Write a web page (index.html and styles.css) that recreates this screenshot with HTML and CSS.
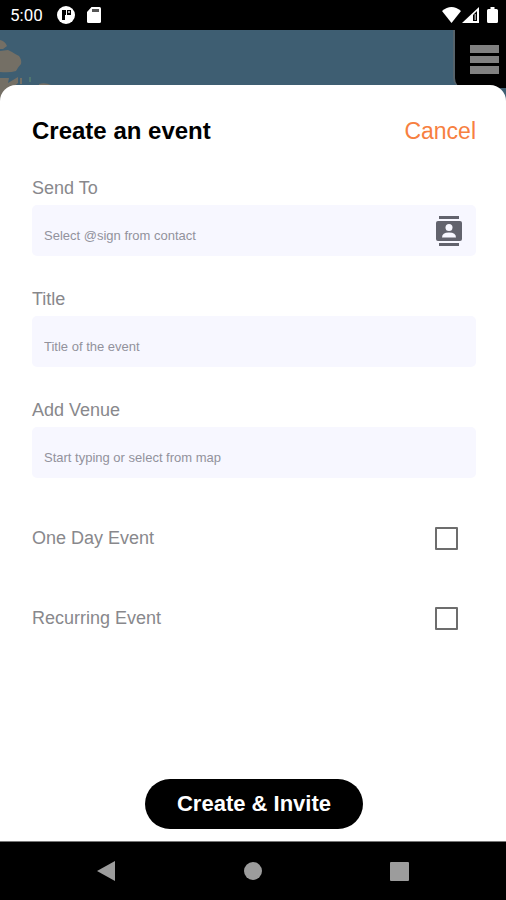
FILE: index.html
```html
<!DOCTYPE html>
<html lang="en">
<head>
<meta charset="utf-8">
<meta name="viewport" content="width=device-width, initial-scale=1">
<title>Create an event</title>
<link rel="stylesheet" href="styles.css">
</head>
<body>
<div class="screen">
  <header class="status">
    <span class="clock">5:00</span>
    <svg class="status-icon" width="18" height="18" viewBox="0 0 18 18" aria-hidden="true">
      <circle cx="9" cy="9" r="9" fill="#fff"/>
      <path d="M5 4h4v5H8v5H5zM10 4h4v5h-4z" fill="#000"/>
      <path d="M11 5h2v2h-2z" fill="#aaa"/>
    </svg>
    <svg width="14" height="16" viewBox="0 0 14 16" aria-hidden="true">
      <path d="M4.500 0H12.500Q14 0 14 1.500V14.500Q14 16 12.500 16H1.500Q0 16 0 14.500V5z" fill="#fff"/>
      <path d="M5 2h7v3H5z" fill="#555"/>
    </svg>
    <span class="spacer"></span>
    <svg width="19" height="16" viewBox="0 0 19 16" aria-hidden="true">
      <path d="M0 4Q9.500-4 19 4L9.500 16z" fill="#fff"/>
    </svg>
    <svg class="signal" width="17" height="16" viewBox="0 0 17 16" aria-hidden="true">
      <path d="M17 0V16H0z" fill="#fff"/>
      <path d="M11 8L15 4V14H11z" fill="#000"/>
      <path d="M12.500 7h1.500v6h-1.500z" fill="#999"/>
    </svg>
    <svg class="battery" width="11" height="16" viewBox="0 0 11 16" aria-hidden="true">
      <path d="M3.500 0h4v2H9.500Q11 2 11 3.500V14.500Q11 16 9.500 16H1.500Q0 16 0 14.500V3.500Q0 2 1.500 2h2z" fill="#fff"/>
    </svg>
  </header>
  <div class="map">
    <svg class="land" width="60" height="70" viewBox="0 0 60 70" aria-hidden="true">
      <path d="M0 10Q5 11 7 16L3 19 0 19zM0 21L8 20 12 22Q15 24 19 26Q22 30 21 34Q18 37 16 41Q10 43 0 42zM0 48L9 48 8 53 13 50 18 47 18 53 12 58 0 70zM20 48h2v6h-2zM39 54q6-2 12 1H39z" fill="#746f65"/>
      <path d="M29 47h2v5h-2z" fill="#4f7770"/>
    </svg>
    <button class="menu" type="button" aria-label="Menu">
      <svg width="29" height="29" viewBox="0 0 29 29" aria-hidden="true">
        <path d="M0 0h29v8H0zM0 11h29v7H0zM0 21h29v8H0z" fill="#818181"/>
      </svg>
    </button>
  </div>
  <main class="sheet">
    <div class="heading">
      <h1>Create an event</h1>
      <button class="cancel" type="button">Cancel</button>
    </div>
    <form class="form">
      <label class="label" for="send-to">Send To</label>
      <div class="field">
        <input id="send-to" type="text" placeholder="Select @sign from contact">
        <button class="contacts" type="button" aria-label="Choose a contact">
          <svg width="26" height="30" viewBox="0 0 26 30" aria-hidden="true">
            <path d="M3 0h20v3H3zM3 27h20v3H3z" fill="#62636d"/>
            <rect y="5" width="26" height="20" rx="2" fill="#62636d"/>
            <circle cx="13" cy="11.500" r="3.500" fill="#f7f7ff"/>
            <path d="M6 21.500Q6 16.500 13 16.500T20 21.500z" fill="#f7f7ff"/>
          </svg>
        </button>
      </div>
      <label class="label" for="title">Title</label>
      <div class="field">
        <input id="title" type="text" placeholder="Title of the event">
      </div>
      <label class="label" for="venue">Add Venue</label>
      <div class="field">
        <input id="venue" type="text" placeholder="Start typing or select from map">
      </div>
      <div class="check-row">
        <label for="one-day">One Day Event</label>
        <input id="one-day" type="checkbox">
      </div>
      <div class="check-row">
        <label for="recurring">Recurring Event</label>
        <input id="recurring" type="checkbox">
      </div>
      <button class="submit" type="submit">Create &amp; Invite</button>
    </form>
  </main>
  <nav class="nav">
    <button type="button" aria-label="Back">
      <svg width="20" height="22" viewBox="0 0 20 22" aria-hidden="true"><path d="M19 1V21L1 11z" fill="#9c9c9c"/></svg>
    </button>
    <button type="button" aria-label="Home">
      <svg width="20" height="22" viewBox="0 0 20 22" aria-hidden="true"><circle cx="10" cy="11" r="9" fill="#9c9c9c"/></svg>
    </button>
    <button type="button" aria-label="Recent apps">
      <svg width="20" height="22" viewBox="0 0 20 22" aria-hidden="true"><rect x="0" y="2" width="19" height="19" rx="1" fill="#9c9c9c"/></svg>
    </button>
  </nav>
</div>
</body>
</html>
```
FILE: styles.css
```css
* {
  box-sizing: border-box;
}

body {
  margin: 0;
  font-family: "Liberation Sans", Arial, sans-serif;
}

button {
  padding: 0;
  border: 0;
  background: none;
  font: inherit;
  cursor: pointer;
}

svg {
  display: block;
}

.screen {
  display: flex;
  flex-direction: column;
  min-height: 100vh;
  background: #000;
}

.status {
  display: flex;
  align-items: center;
  height: 30px;
  padding: 0 8px 0 10px;
  color: #fff;
}

.clock {
  font-family: Roboto, sans-serif;
  font-size: 17px;
  line-height: 30px;
}

.status-icon {
  margin: 0 12px 0 14px;
}

.spacer {
  flex: 1;
}

.signal {
  margin: 0 8px 0 1px;
}

.map {
  display: flex;
  justify-content: space-between;
  height: 70px;
  margin-bottom: -15px;
  background: #3e5e72;
}

.menu {
  display: flex;
  justify-content: flex-end;
  width: 53px;
  height: 58px;
  padding: 15px 7px 0 0;
  border-left: 2px solid #56636b;
  border-bottom-left-radius: 10px;
  background: #000;
}

.sheet {
  display: flex;
  flex: 1;
  flex-direction: column;
  padding: 30px 30px 12px 32px;
  border-radius: 16px 16px 0 0;
  background: #fff;
}

.heading {
  display: flex;
  align-items: center;
  justify-content: space-between;
  margin-bottom: 24px;
  line-height: 32px;
}

h1 {
  margin: 0;
  font-size: 24px;
  color: #000;
}

.cancel {
  font-size: 23px;
  color: #f7803f;
}

.form {
  display: flex;
  flex: 1;
  flex-direction: column;
}

.label,
.check-row {
  font-size: 18px;
  line-height: 34px;
  color: #88888c;
}

.field {
  display: flex;
  align-items: center;
  height: 51px;
  margin-bottom: 26px;
  padding-right: 14px;
  border-radius: 5px;
  background: #f7f7ff;
}

.field input {
  flex: 1;
  min-width: 0;
  height: 100%;
  padding: 10px 12px 0;
  border: 0;
  background: none;
  font: inherit;
  font-size: 13px;
  color: #333;
}

.field input::placeholder {
  color: #92929c;
  opacity: 1;
}

.check-row {
  display: flex;
  align-items: center;
  justify-content: space-between;
  height: 80px;
  padding-right: 18px;
}

.field + .check-row {
  margin-top: -6px;
}

.check-row input {
  appearance: none;
  width: 23px;
  height: 23px;
  margin: 0;
  border: 2px solid #6d6d6d;
  border-radius: 1px;
}

.check-row input:checked {
  background: #6d6d6d;
}

.submit {
  align-self: center;
  margin-top: auto;
  padding: 0 32px;
  border-radius: 25px;
  background: #000;
  font-size: 22px;
  font-weight: bold;
  line-height: 50px;
  color: #fff;
}

.nav {
  display: flex;
  align-items: center;
  justify-content: space-between;
  height: 59px;
  padding: 0 19%;
  border-top: 1px solid #777;
}
```
